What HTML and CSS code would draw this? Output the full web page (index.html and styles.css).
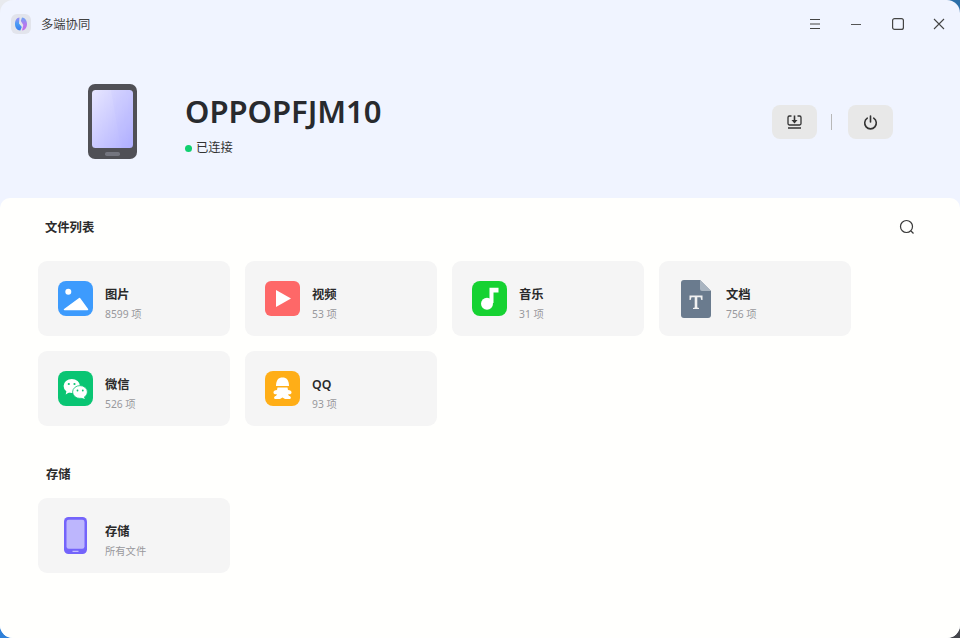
FILE: index.html
```html
<!DOCTYPE html>
<html lang="zh-CN">
  <head>
    <meta charset="UTF-8" />
    <title>多端协同</title>
    <link rel="stylesheet" href="styles.css">
  </head>
  <body>
    <div class="window">
      <div class="titlebar">
        <svg class="app-logo" width="20" height="20" viewBox="0 0 20 20">
          <defs>
            <linearGradient id="logoL" x1="0" y1="0" x2="0" y2="1">
              <stop offset="0" stop-color="#9f8cf6" />
              <stop offset=".5" stop-color="#4a9cf5" />
              <stop offset="1" stop-color="#3a7df0" />
            </linearGradient>
            <linearGradient id="logoR" x1="0" y1="0" x2="0" y2="1">
              <stop offset="0" stop-color="#6aa5f5" />
              <stop offset=".5" stop-color="#b27bf0" />
              <stop offset="1" stop-color="#c56fe6" />
            </linearGradient>
          </defs>
          <rect width="20" height="20" rx="6" fill="#e2e4ec" />
          <path d="M8.500 3.500C5.500 3.500 4 6.500 4 10s1.800 6.500 5.300 6.500L10.800 13 8 9.500z" fill="url(#logoL)" />
          <path d="M11 3.500c3 0 5 3 5 6.500s-2 6.500-5 6.500L12.300 11 9.800 7z" fill="url(#logoR)" />
        </svg>
        <span class="app-name">多端协同</span>
        <div class="win-btns">
          <svg width="12" height="12" viewBox="0 0 12 12" fill="none" stroke="#444" stroke-width="1.100">
            <path d="M1 1.500h10M1 6h10M1 10.500h10" />
          </svg>
          <svg width="12" height="12" viewBox="0 0 12 12" fill="none" stroke="#555" stroke-width="1.100">
            <path d="M1 6.500h10" />
          </svg>
          <svg width="12" height="12" viewBox="0 0 12 12" fill="none" stroke="#444" stroke-width="1.200">
            <rect x=".6" y=".6" width="10.800" height="10.800" rx="2" />
          </svg>
          <svg width="12" height="12" viewBox="0 0 12 12" fill="none" stroke="#444" stroke-width="1.100">
            <path d="M1 1l10 10M11 1L1 11" />
          </svg>
        </div>
      </div>

      <div class="device">
        <svg class="phone" width="49" height="75" viewBox="0 0 49 75">
          <defs>
            <linearGradient id="screen" x1="0" y1="0" x2="1" y2="1">
              <stop offset="0" stop-color="#e7e6ff" />
              <stop offset="1" stop-color="#b0afff" />
            </linearGradient>
          </defs>
          <rect width="49" height="75" rx="7" fill="#505056" />
          <rect x="4" y="6" width="41" height="58" rx="3.500" fill="url(#screen)" />
          <path d="M23 6H41.500A3.500 3.500 0 0 1 45 9.500V60.500A3.500 3.500 0 0 1 41.500 64H33z" fill="#a8a7ff" opacity=".08" />
          <rect x="17" y="68" width="15" height="4" rx="1.800" fill="#74757f" />
        </svg>
        <div class="device-info">
          <div class="device-name">OPPOPFJM10</div>
          <div class="device-state"><span class="dot"></span>已连接</div>
        </div>
        <div class="device-actions">
          <button class="action">
            <svg width="15" height="14" viewBox="0 0 15 14" fill="none" stroke="#333" stroke-width="1.300">
              <path d="M4.500 1H2.400A1.400 1.400 0 0 0 1 2.400V8.600A1.400 1.400 0 0 0 2.400 10H12.600A1.400 1.400 0 0 0 14 8.600V2.400A1.400 1.400 0 0 0 12.600 1H10.500" />
              <path d="M1 13h13" />
              <path d="M7.500 .5v5" stroke-width="1.600" />
              <path d="M4.500 5h6L7.500 8.500z" fill="#333" stroke="none" />
            </svg>
          </button>
          <span class="sep"></span>
          <button class="action">
            <svg width="15" height="15" viewBox="0 0 15 15" fill="none" stroke="#333" stroke-width="1.600" stroke-linecap="round">
              <path d="M4.300 3.200a5.800 5.800 0 1 0 6.400 0" />
              <path d="M7.500 1v6" />
            </svg>
          </button>
        </div>
      </div>

      <div class="panel">
        <div class="section-head">
          <h2>文件列表</h2>
          <svg width="16" height="16" viewBox="0 0 16 16" fill="none" stroke="#3a3a3a" stroke-width="1.200">
            <circle cx="7.500" cy="7.500" r="6" />
            <path d="M12 12l2.500 2.500" />
          </svg>
        </div>
        <div class="grid">
          <div class="card">
            <svg class="icon" width="35" height="35" viewBox="0 0 35 35">
              <rect width="35" height="35" rx="8" fill="#3d9bfd" />
              <circle cx="10.300" cy="10.700" r="3" fill="#fff" />
              <path d="M6.500 28.500L21.500 17.500 29.500 28.500z" fill="#fff" stroke="#fff" stroke-width="1.500" stroke-linejoin="round" />
            </svg>
            <div class="card-text"><div class="card-title">图片</div><div class="card-sub">8599 项</div></div>
          </div>
          <div class="card">
            <svg class="icon" width="35" height="35" viewBox="0 0 35 35">
              <rect width="35" height="35" rx="6" fill="#fe6868" />
              <path d="M11 9L26 17.500 11 26z" fill="#fff" />
            </svg>
            <div class="card-text"><div class="card-title">视频</div><div class="card-sub">53 项</div></div>
          </div>
          <div class="card">
            <svg class="icon" width="35" height="35" viewBox="0 0 35 35">
              <rect width="35" height="35" rx="8" fill="#16d232" />
              <circle cx="15" cy="22.700" r="6" fill="#fff" />
              <path d="M17.500 22V6.700H26.500V11.500H21.500V22z" fill="#fff" />
            </svg>
            <div class="card-text"><div class="card-title">音乐</div><div class="card-sub">31 项</div></div>
          </div>
          <div class="card">
            <svg class="icon doc" width="30" height="38" viewBox="0 0 30 38">
              <path d="M3 0H19L30 11V35a3 3 0 0 1-3 3H3a3 3 0 0 1-3-3V3a3 3 0 0 1 3-3z" fill="#6a7b8e" />
              <path d="M19 0L30 11H21a2 2 0 0 1-2-2z" fill="#a9b4c0" />
              <path d="M8.500 15.500H21.500V20H20.300L19.500 17.300H16.300V27.500L18 28V29H12V28L13.700 27.500V17.300H10.500L9.700 20H8.500z" fill="#f1f1f1" />
            </svg>
            <div class="card-text"><div class="card-title">文档</div><div class="card-sub">756 项</div></div>
          </div>
          <div class="card">
            <svg class="icon" width="35" height="35" viewBox="0 0 35 35">
              <rect width="35" height="35" rx="8" fill="#09c573" />
              <ellipse cx="13.800" cy="15" rx="8.200" ry="7" fill="#fff" />
              <path d="M8.500 20l-.8 3.500 4-2.500z" fill="#fff" />
              <ellipse cx="22" cy="21" rx="7.400" ry="6.400" fill="#fff" stroke="#09c573" stroke-width=".8" />
              <path d="M25.500 25.500l1.500 2.500-4.500-1.500z" fill="#fff" />
              <circle cx="10.800" cy="13" r="1.100" fill="#09c573" />
              <circle cx="16.500" cy="13" r="1.100" fill="#09c573" />
              <circle cx="19.500" cy="19.500" r=".9" fill="#09c573" />
              <circle cx="24.800" cy="19.500" r=".9" fill="#09c573" />
            </svg>
            <div class="card-text"><div class="card-title">微信</div><div class="card-sub">526 项</div></div>
          </div>
          <div class="card">
            <svg class="icon" width="35" height="35" viewBox="0 0 35 35">
              <rect width="35" height="35" rx="8" fill="#ffae17" />
              <path d="M11 15C11 9 13.500 6.500 17.500 6.500S24 9 24 15z" fill="#fff" />
              <path d="M12.500 16.500H22.500L23 19C25 19 27 20 26.500 22 26 23.500 24 23.500 23 23L24 25C26 25 26.500 27.500 25 28H20L17.500 26.500 15 28H10C8.500 27.500 9 25 11 25L12 23C11 23.500 9 23.500 8.500 22 8 20 10 19 12 19z" fill="#fff" />
            </svg>
            <div class="card-text"><div class="card-title">QQ</div><div class="card-sub">93 项</div></div>
          </div>
        </div>

        <div class="section-head storage-head">
          <h2>存储</h2>
        </div>
        <div class="grid">
          <div class="card">
            <svg class="icon storage" width="23" height="37" viewBox="0 0 23 37">
              <rect width="23" height="37" rx="4.500" fill="#7464fb" />
              <rect x="2.500" y="2.800" width="18" height="29" rx="2.200" fill="#bdb6fd" />
              <path d="M8.500 34.300h6" stroke="#d8d3ff" stroke-width="1" />
            </svg>
            <div class="card-text"><div class="card-title">存储</div><div class="card-sub">所有文件</div></div>
          </div>
        </div>
      </div>
    </div>
  </body>
</html>
```

FILE: styles.css
```css
* {
  box-sizing: border-box;
}
html,
body {
  height: 100%;
}
body {
  margin: 0;
  /* desktop wallpaper showing through the four window corners */
  background:
    linear-gradient(#e8eaee, #e8eaee) left top / 50% 50% no-repeat,
    linear-gradient(#2c6fa8, #2c6fa8) right top / 50% 50% no-repeat,
    linear-gradient(#2f80d8, #2f80d8) left bottom / 50% 50% no-repeat,
    linear-gradient(#45464c, #45464c) right bottom / 50% 50% no-repeat;
  font-family: "Noto Sans", "Noto Sans CJK SC", sans-serif;
  color: #262626;
  overflow: hidden;
}
.window {
  height: 638px;
  background: #f0f4ff;
  border-radius: 13px;
  display: flex;
  flex-direction: column;
  overflow: hidden;
}
.titlebar {
  height: 48px;
  flex: none;
  display: flex;
  align-items: center;
  padding-left: 11px;
}
.app-name {
  margin-left: 10px;
  font-size: 12.300px;
  color: #414141;
}
.win-btns {
  margin-left: auto;
  display: flex;
  gap: 29.300px;
  padding-right: 15px;
}
.device {
  height: 150px;
  flex: none;
  display: flex;
  align-items: center;
  padding: 0 67px 0 88px;
}
.phone {
  flex: none;
  margin-bottom: 3px;
}
.device-info {
  margin-left: 48px;
  margin-top: 3px;
}
.device-name {
  font-size: 31px;
  font-weight: 600;
  line-height: 40px;
  color: #282a2e;
}
.device-state {
  display: flex;
  align-items: center;
  font-size: 12.300px;
  line-height: 20px;
  margin-top: 7px;
  color: #333;
}
.dot {
  width: 7px;
  height: 7px;
  border-radius: 50%;
  background: #10d070;
  margin-right: 4px;
}
.device-actions {
  margin-left: auto;
  margin-bottom: 2px;
  display: flex;
  align-items: center;
}
.action {
  width: 45px;
  height: 34px;
  border: none;
  border-radius: 8px;
  background: #e8e8e8;
  display: flex;
  align-items: center;
  justify-content: center;
  padding: 0;
}
.sep {
  width: 1px;
  height: 16px;
  background: #b8b8b8;
  margin: 0 16px 0 14px;
}
.panel {
  flex: 1;
  background: #fffffd;
  border-radius: 10px 10px 0 0;
  padding: 0 38px;
}
.section-head {
  height: 63px;
  display: flex;
  align-items: center;
  justify-content: space-between;
  padding: 0 7px 5px;
}
.section-head h2 {
  margin: 0;
  font-size: 12.300px;
  font-weight: 600;
  color: #2b2b2b;
}
.storage-head {
  height: 72px;
  padding: 24px 8px 0;
}
.grid {
  display: grid;
  grid-template-columns: repeat(4, 192px);
  grid-auto-rows: 75px;
  gap: 15px;
}
.card {
  background: #f5f5f5;
  border-radius: 9px;
  display: flex;
  align-items: center;
  padding-left: 20px;
}
.icon {
  flex: none;
  margin-right: 12px;
}
.icon.doc {
  margin-left: 2px;
  margin-right: 15px;
}
.icon.storage {
  margin-left: 6px;
  margin-right: 18px;
}
.card-text {
  margin-top: 8px;
}
.card-title {
  font-size: 12.300px;
  font-weight: 600;
  line-height: 20px;
  color: #2a2a2a;
}
.card-sub {
  font-size: 10.300px;
  line-height: 14px;
  margin-top: 2px;
  color: #98989c;
}
```
